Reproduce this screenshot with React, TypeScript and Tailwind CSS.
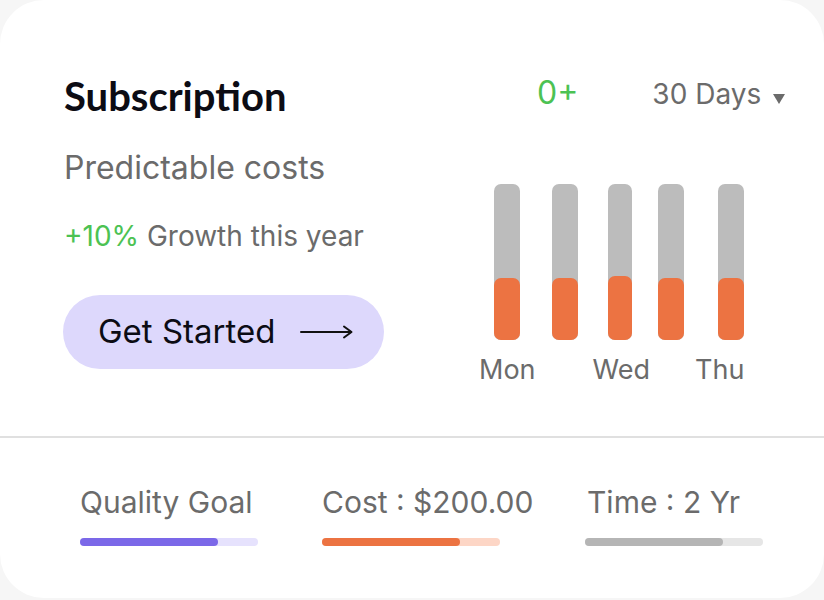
import React from "react";

const bars = [
  { cls: "ml-[74px] w-[26px]", orange: "h-[62px]" },
  { cls: "ml-[32px] w-[26px]", orange: "h-[62px]" },
  { cls: "ml-[30px] w-[24px]", orange: "h-[64px]" },
  { cls: "ml-[26px] w-[26px]", orange: "h-[62px]" },
  { cls: "ml-[34px] w-[26px]", orange: "h-[62px]" },
];

function Arrow() {
  return (
    <svg width="53" height="14" viewBox="0 0 53 14" fill="none">
      <path d="M1 7H51" stroke="#111" strokeWidth="2" strokeLinecap="round" />
      <path d="M44 1.5L51.5 7L44 12.5" stroke="#111" strokeWidth="2" strokeLinecap="round" strokeLinejoin="round" />
    </svg>
  );
}

function Progress({ fill, track }: { fill: string; track: string }) {
  return (
    <div className={`w-[178px] h-[8px] rounded-full ${track}`}>
      <div className={`w-[138px] h-[8px] rounded-full ${fill}`} />
    </div>
  );
}

export default function App() {
  return (
    <div className="w-[824px] h-[600px] bg-[#f6f6f6]" style={{ fontFamily: "Inter, 'Noto Sans', sans-serif" }}>
      <div className="w-[824px] h-[598px] bg-white rounded-[44px] flex flex-col overflow-hidden">
        <div className="h-[436px] flex">
          <div className="w-[420px] pl-[64px] pt-[72px] flex flex-col items-start">
            <h1
              className="text-[40px] leading-[48px] font-bold text-[#0c0c14]"
              style={{ fontFamily: "Lato, 'Noto Sans', sans-serif" }}
            >
              Subscription
            </h1>
            <p className="mt-[28px] text-[32px] leading-[40px] text-[#6b6b6b]">Predictable costs</p>
            <p className="mt-[30px] text-[28px] leading-[36px] text-[#6b6b6b]">
              <span className="text-[#4cc253]">+10%</span> Growth this year
            </p>
            <button className="mt-[41px] -ml-[1px] h-[74px] w-[321px] rounded-full bg-[#ddd8fc] flex items-center pl-[35px] gap-[25px] text-[33px] text-[#0c0c14]">
              <span>Get Started</span>
              <Arrow />
            </button>
          </div>
          <div className="flex-1 pt-[73px] flex flex-col">
            <div className="flex items-baseline h-[40px]">
              <span className="ml-[117px] text-[32px] leading-[40px] text-[#4cc253]">0+</span>
              <span className="ml-[74px] text-[28px] leading-[40px] text-[#6b6b6b]">30 Days</span>
              <svg className="ml-[12px]" width="12" height="10" viewBox="0 0 12 10">
                <path d="M0 0H12L6 10Z" fill="#6b6b6b" />
              </svg>
            </div>
            <div className="flex mt-[71px] h-[156px]">
              {bars.map((b, i) => (
                <div key={i} className={`${b.cls} h-[156px] rounded-[7px] bg-[#bcbcbc] flex flex-col justify-end`}>
                  <div className={`${b.orange} rounded-[7px] bg-[#ec7342]`} />
                </div>
              ))}
            </div>
            <div className="flex mt-[13px] text-[27px] leading-[34px] text-[#6b6b6b]">
              <span className="ml-[59px]">Mon</span>
              <span className="ml-[57px]">Wed</span>
              <span className="ml-[45px]">Thu</span>
            </div>
          </div>
        </div>
        <div className="h-[2px] bg-[#e0e0e0]" />
        <div className="flex pl-[80px] pt-[46px]">
          <div className="w-[242px] flex flex-col">
            <span className="text-[30px] leading-[36px] text-[#6b6b6b]">Quality Goal</span>
            <div className="mt-[18px]">
              <Progress fill="bg-[#7b68e8]" track="bg-[#e6e2fd]" />
            </div>
          </div>
          <div className="w-[263px] flex flex-col">
            <span className="text-[30px] leading-[36px] text-[#6b6b6b]">Cost : $200.00</span>
            <div className="mt-[18px]">
              <Progress fill="bg-[#ec7342]" track="bg-[#fdd6c6]" />
            </div>
          </div>
          <div className="flex flex-col">
            <span className="ml-[2px] text-[30px] leading-[36px] text-[#6b6b6b]">Time : 2 Yr</span>
            <div className="mt-[18px]">
              <Progress fill="bg-[#b5b5b5]" track="bg-[#e6e6e6]" />
            </div>
          </div>
        </div>
      </div>
    </div>
  );
}
